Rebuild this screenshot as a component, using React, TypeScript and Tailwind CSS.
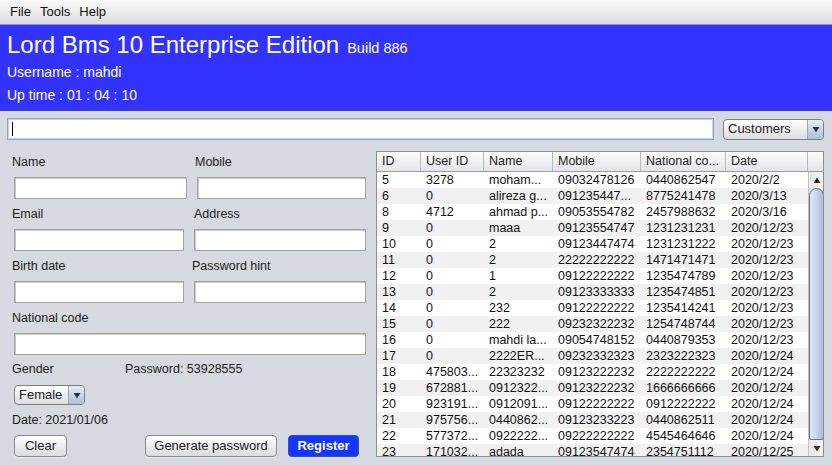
import React from "react";

const rows: string[][] = [
  ["5", "3278", "moham...", "09032478126", "0440862547", "2020/2/2"],
  ["6", "0", "alireza g...", "091235447...", "8775241478", "2020/3/13"],
  ["8", "4712", "ahmad p...", "09053554782", "2457988632", "2020/3/16"],
  ["9", "0", "maaa", "09123554747", "1231231231", "2020/12/23"],
  ["10", "0", "2", "09123447474", "1231231222", "2020/12/23"],
  ["11", "0", "2", "22222222222", "1471471471", "2020/12/23"],
  ["12", "0", "1", "09122222222", "1235474789", "2020/12/23"],
  ["13", "0", "2", "09123333333", "1235474851", "2020/12/23"],
  ["14", "0", "232", "09122222222", "1235414241", "2020/12/23"],
  ["15", "0", "222", "09232322232", "1254748744", "2020/12/23"],
  ["16", "0", "mahdi la...", "09054748152", "0440879353", "2020/12/23"],
  ["17", "0", "2222ER...", "09232332323", "2323222323", "2020/12/24"],
  ["18", "475803...", "22323232", "09123222232", "2222222222", "2020/12/24"],
  ["19", "672881...", "0912322...", "09123222232", "1666666666", "2020/12/24"],
  ["20", "923191...", "0912091...", "09122222222", "0912222222", "2020/12/24"],
  ["21", "975756...", "0440862...", "09123233223", "0440862511", "2020/12/24"],
  ["22", "577372...", "0922222...", "09222222222", "4545464646", "2020/12/24"],
  ["23", "171032...", "adada", "09123547474", "2354751112", "2020/12/25"],
];

const headers = ["ID", "User ID", "Name", "Mobile", "National co...", "Date"];
const widths = ["w-[44px]", "w-[63px]", "w-[69px]", "w-[88px]", "w-[85px]", "w-[82px]"];

function Field({ w }: { w: string }) {
  return (
    <div
      className={`${w} h-[22px] bg-white border border-[#a3a3a3] shadow-[inset_1px_1px_0_#c8c8c8]`}
    />
  );
}

function Label({ children, w }: { children: React.ReactNode; w?: string }) {
  return <div className={`${w ?? ""} h-[16px] leading-[16px] text-[#222]`}>{children}</div>;
}

function Arrow() {
  return (
    <svg width="8" height="7" viewBox="0 0 8 7">
      <path d="M0.5 1 L7.5 1 L4 6.5 Z" fill="#333" />
    </svg>
  );
}

function Btn({ children, w }: { children: React.ReactNode; w: string }) {
  return (
    <div
      className={`${w} h-[22px] rounded-[4px] border border-[#8a8a8a] bg-gradient-to-b from-[#ffffff] to-[#d9dbe0] flex items-center justify-center text-[#222] shadow-[0_1px_0_#f0f0f0]`}
    >
      {children}
    </div>
  );
}

export default function App() {
  return (
    <div
      className="w-[832px] h-[465px] overflow-hidden bg-[#d6d9df] flex flex-col text-[12.5px] text-[#222]"
      style={{ fontFamily: "'Liberation Sans', Arial, sans-serif" }}
    >
      {/* menu bar */}
      <div className="h-[25px] shrink-0 bg-gradient-to-b from-[#fbfbfb] to-[#dcdcdc] border-b border-[#9a9a9a] flex items-center pl-[10px] gap-[9px] text-[13px] text-[#111]">
        <span>File</span>
        <span>Tools</span>
        <span>Help</span>
      </div>

      {/* header */}
      <div className="h-[86px] shrink-0 bg-[#3333ff] text-white px-[7px] pt-[5px]">
        <div className="flex items-baseline h-[30px]">
          <span className="text-[24px] leading-[30px]">Lord Bms 10 Enterprise Edition</span>
          <span className="text-[14.5px] ml-[8px]">Build 886</span>
        </div>
        <div className="text-[14px] leading-[17px] mt-[4px]">Username : mahdi</div>
        <div className="text-[14px] leading-[17px] mt-[6px]">Up time : 01 : 04 : 10</div>
      </div>

      {/* search row */}
      <div className="flex items-center mt-[7px] pl-[7px] h-[22px] shrink-0">
        <div className="w-[707px] h-[22px] bg-white border border-[#86a6cf] shadow-[inset_0_0_0_1px_#c4d6ec] flex items-center pl-[4px]">
          <div className="w-[1px] h-[14px] bg-black" />
        </div>
        <div className="ml-[9px] w-[101px] h-[21px] rounded-[4px] border border-[#7f7f7f] bg-gradient-to-b from-[#ffffff] to-[#dcdee3] flex items-center overflow-hidden">
          <span className="flex-1 pl-[4px] text-[13px]">Customers</span>
          <div className="w-[16px] h-full border-l border-[#9aa4b3] bg-gradient-to-b from-[#e6edf6] to-[#aebfd6] flex items-center justify-center">
            <Arrow />
          </div>
        </div>
      </div>

      {/* body */}
      <div className="flex mt-[11px]">
        {/* form */}
        <div className="w-[369px] ml-[7px] flex flex-col pt-[3px]">
          <div className="flex pl-[5px]">
            <Label w="w-[183px]">Name</Label>
            <Label>Mobile</Label>
          </div>
          <div className="flex mt-[7px] pl-[7px]">
            <Field w="w-[173px]" />
            <div className="ml-[10px]">
              <Field w="w-[169px]" />
            </div>
          </div>

          <div className="flex pl-[5px] mt-[7px]">
            <Label w="w-[182px]">Email</Label>
            <Label>Address</Label>
          </div>
          <div className="flex mt-[7px] pl-[7px]">
            <Field w="w-[170px]" />
            <div className="ml-[10px]">
              <Field w="w-[172px]" />
            </div>
          </div>

          <div className="flex pl-[5px] mt-[7px]">
            <Label w="w-[180px]">Birth date</Label>
            <Label>Password hint</Label>
          </div>
          <div className="flex mt-[7px] pl-[7px]">
            <Field w="w-[170px]" />
            <div className="ml-[10px]">
              <Field w="w-[172px]" />
            </div>
          </div>

          <div className="flex pl-[5px] mt-[7px]">
            <Label>National code</Label>
          </div>
          <div className="flex mt-[7px] pl-[7px]">
            <Field w="w-[352px]" />
          </div>

          <div className="flex pl-[5px] mt-[6px]">
            <Label w="w-[113px]">Gender</Label>
            <Label>Password: 53928555</Label>
          </div>
          <div className="flex mt-[8px] pl-[7px]">
            <div className="w-[71px] h-[20px] rounded-[4px] border border-[#7f7f7f] bg-gradient-to-b from-[#ffffff] to-[#dcdee3] flex items-center overflow-hidden">
              <span className="flex-1 pl-[4px] text-[13px]">Female</span>
              <div className="w-[16px] h-full border-l border-[#9aa4b3] bg-gradient-to-b from-[#e6edf6] to-[#aebfd6] flex items-center justify-center">
                <Arrow />
              </div>
            </div>
          </div>

          <div className="flex pl-[5px] mt-[7px]">
            <Label>Date: 2021/01/06</Label>
          </div>

          <div className="flex mt-[7px] pl-[7px] text-[13px]">
            <Btn w="w-[53px]">Clear</Btn>
            <div className="ml-[78px]">
              <Btn w="w-[132px]">Generate password</Btn>
            </div>
            <div className="ml-[11px] w-[71px] h-[22px] rounded-[4px] border border-[#3a4fa8] bg-[#1436ff] flex items-center justify-center text-white font-bold">
              Register
            </div>
          </div>
        </div>

        {/* table */}
        <div className="w-[448px] h-[306px] border border-[#8e8e8e] bg-white flex flex-col overflow-hidden">
          <div className="h-[20px] shrink-0 flex bg-gradient-to-b from-[#fdfdfd] to-[#e3e5e9] border-b border-[#9c9c9c]">
            {headers.map((h, i) => (
              <div
                key={h}
                className={`${widths[i]} shrink-0 border-r border-[#b8b8b8] pl-[5px] leading-[19px] whitespace-nowrap overflow-hidden`}
              >
                {h}
              </div>
            ))}
            <div className="flex-1" />
          </div>
          <div className="flex flex-1 overflow-hidden">
            <div className="flex flex-col w-[431px]">
              {rows.map((r, ri) => (
                <div
                  key={ri}
                  className={`h-[16px] shrink-0 flex ${ri % 2 === 1 ? "bg-[#f1f1f1]" : "bg-white"}`}
                >
                  {r.map((c, ci) => (
                    <div
                      key={ci}
                      className={`${widths[ci]} shrink-0 pl-[5px] leading-[16px] whitespace-nowrap overflow-hidden text-[#111]`}
                    >
                      {c}
                    </div>
                  ))}
                </div>
              ))}
            </div>
            {/* scrollbar */}
            <div className="w-[16px] shrink-0 border-l border-[#c4c4c4] bg-gradient-to-r from-[#e8e8e8] to-[#f6f6f6] flex flex-col">
              <div className="h-[16px] flex items-center justify-center">
                <svg width="8" height="7" viewBox="0 0 8 7">
                  <path d="M0.5 6 L7.5 6 L4 0.5 Z" fill="#222" />
                </svg>
              </div>
              <div className="flex-1 mx-[0px] rounded-t-[9px] rounded-b-[3px] border border-[#5d6f8a] bg-gradient-to-r from-[#dde8f4] via-[#c7d7ea] to-[#a9bdd6]" />
              <div className="h-[16px] flex items-center justify-center">
                <Arrow />
              </div>
            </div>
          </div>
        </div>
      </div>
    </div>
  );
}
